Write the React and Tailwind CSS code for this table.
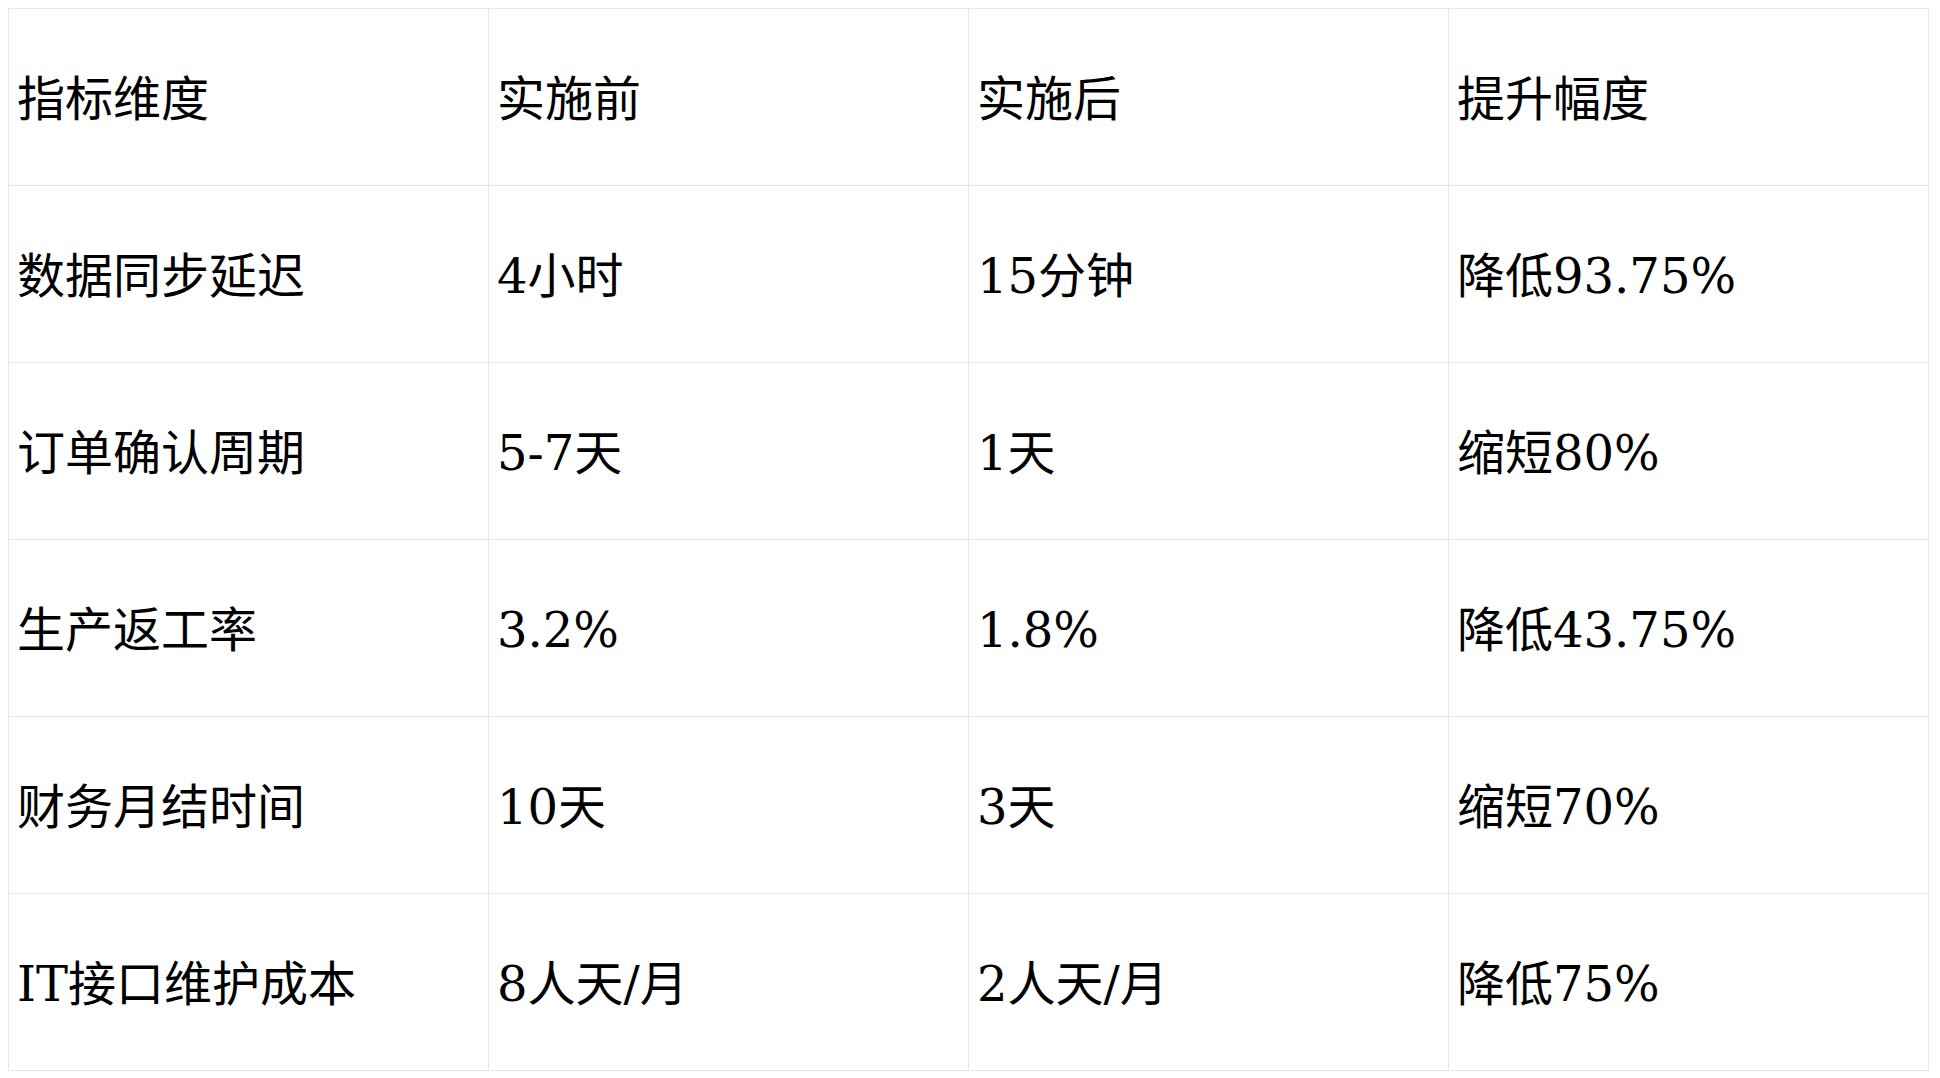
const rows = [
  ['指标维度', '实施前', '实施后', '提升幅度'],
  ['数据同步延迟', '4小时', '15分钟', '降低93.75%'],
  ['订单确认周期', '5-7天', '1天', '缩短80%'],
  ['生产返工率', '3.2%', '1.8%', '降低43.75%'],
  ['财务月结时间', '10天', '3天', '缩短70%'],
  ['IT接口维护成本', '8人天/月', '2人天/月', '降低75%'],
]

const App = () => {
  return (
    <div className="min-h-screen bg-white p-2">
      <table
        className="w-[1921px] table-fixed border-collapse text-[48px] text-black"
        style={{ fontFamily: '"DejaVu Serif", "Noto Sans CJK SC", serif' }}
      >
        <tbody>
          {rows.map((row, i) => (
            <tr key={i} className="h-[177px]">
              {row.map((cell, j) => (
                <td key={j} className="border border-[#e5e7eb] px-2 pt-1 pb-0 align-middle leading-none">
                  {cell}
                </td>
              ))}
            </tr>
          ))}
        </tbody>
      </table>
    </div>
  )
}

export default App
